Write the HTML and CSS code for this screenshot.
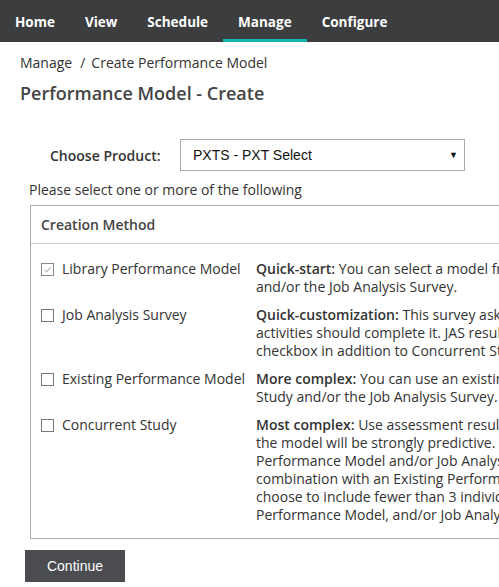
FILE: index.html
```html
<!DOCTYPE html>
<html>
<head>
<meta charset="utf-8">
<link rel="stylesheet" href="styles.css">
</head>
<body>
<nav class="topnav">
  <a class="nav-item">Home</a>
  <a class="nav-item">View</a>
  <a class="nav-item">Schedule</a>
  <a class="nav-item active">Manage</a>
  <a class="nav-item">Configure</a>
</nav>
<main class="page">
  <div class="crumbs"><span>Manage</span><span class="sep">/</span><span>Create Performance Model</span></div>
  <h1 class="title">Performance Model - Create</h1>
  <div class="product-row">
    <label class="product-label">Choose Product:</label>
    <div class="select"><span>PXTS - PXT Select</span><span class="arrow">&#9660;</span></div>
  </div>
  <p class="hint">Please select one or more of the following</p>
  <div class="methods">
    <div class="methods-head">Creation Method</div>
    <div class="methods-body">
      <div class="method">
        <div class="opt"><span class="cb checked"><svg viewBox="0 0 13 13" width="13" height="13"><path d="M3.5 6.8 L5.6 8.8 L9.6 4.2" fill="none" stroke="#9a9aa8" stroke-width="1"/></svg></span>Library Performance Model</div>
        <div class="desc">
          <span class="ln"><b>Quick-start:</b> You can select a model from the library and customize it with Concurrent Study</span>
          <span class="ln">and/or the Job Analysis Survey.</span>
        </div>
      </div>
      <div class="method">
        <div class="opt"><span class="cb"></span>Job Analysis Survey</div>
        <div class="desc">
          <span class="ln"><b>Quick-customization:</b> This survey asks people familiar with the position which</span>
          <span class="ln">activities should complete it. JAS results can be used alone, or you can select this</span>
          <span class="ln">checkbox in addition to Concurrent Study and/or an Existing Performance Model.</span>
        </div>
      </div>
      <div class="method">
        <div class="opt"><span class="cb"></span>Existing Performance Model</div>
        <div class="desc">
          <span class="ln"><b>More complex:</b> You can use an existing performance model and customize it with Concurrent</span>
          <span class="ln">Study and/or the Job Analysis Survey.</span>
        </div>
      </div>
      <div class="method">
        <div class="opt"><span class="cb"></span>Concurrent Study</div>
        <div class="desc">
          <span class="ln"><b>Most complex:</b> Use assessment results from successful employees so that</span>
          <span class="ln">the model will be strongly predictive.</span>
          <span class="ln">Performance Model and/or Job Analysis Survey results can be used in</span>
          <span class="ln">combination with an Existing Performance Model. If you</span>
          <span class="ln">choose to include fewer than 3 individuals, you must also select Library</span>
          <span class="ln">Performance Model, and/or Job Analysis Survey.</span>
        </div>
      </div>
    </div>
  </div>
  <button class="btn">Continue</button>
</main>
</body>
</html>
```
FILE: styles.css
```css
html, body { margin: 0; padding: 0; overflow: hidden; }
body { font-family: "Open Sans", "Liberation Sans", sans-serif; color: #333; background: #fff; width: 499px; }
.topnav { display: flex; height: 42px; background: #3c3d3f; padding-left: 1px; }
.nav-item { display: flex; align-items: center; color: #fff; font-weight: 700; font-size: 13.5px; padding: 5px 15px 0 15px; height: 42px; box-sizing: border-box; border-bottom: 3px solid transparent; }
.nav-item:first-child { padding-left: 14px; }
.nav-item.active { border-bottom-color: #13b5b1; }
.page { padding: 10px 0 0 0; }
.crumbs { font-size: 14px; color: #333; padding-left: 20px; height: 22px; line-height: 22px; }
.crumbs .sep { margin: 0 6px 0 8px; }
.title { font-size: 18px; font-weight: 600; color: #444; margin: 7px 0 0 20px; line-height: 24px; }
.product-row { display: flex; align-items: center; margin: 34px 0 0 50px; }
.product-label { font-size: 14px; font-weight: 600; color: #333; width: 130px; }
.select { box-sizing: border-box; width: 285px; height: 32px; border: 1px solid #aaaab2; display: flex; align-items: center; justify-content: space-between; padding: 0 6px 0 12px; font-family: "Liberation Sans", Arial, sans-serif; font-size: 14px; color: #111; }
.arrow { font-size: 9px; color: #111; }
.hint { font-size: 14px; margin: 9px 0 0 29px; line-height: 20px; }
.methods { margin: 5px 0 0 30px; width: 760px; border: 1px solid #aaaab0; }
.methods-head { font-size: 14px; font-weight: 600; color: #444; padding: 0 0 0 10px; height: 38px; line-height: 38px; border-bottom: 1px solid #ccc; box-sizing: border-box; }
.methods-body { padding: 11px 0 9px 0; }
.method { display: flex; padding: 5px 0; }
.opt { flex: none; box-sizing: border-box; width: 225px; padding-left: 10px; font-size: 14px; line-height: 18px; display: flex; align-items: flex-start; white-space: nowrap; }
.cb { box-sizing: border-box; width: 13px; height: 13px; border: 1px solid #777; margin: 3px 8px 0 0; display: inline-block; flex: none; position: relative; }
.cb.checked { border-color: #888; }
.cb svg { position: absolute; left: -1px; top: -1px; }
.desc { flex: none; font-size: 14px; line-height: 18px; }
.desc b { font-weight: 600; }
.ln { display: block; white-space: nowrap; }
.btn { margin: 11px 0 0 25px; width: 100px; height: 32px; border: 0; background: #4a4c50; color: #fff; font-family: "Liberation Sans", Arial, sans-serif; font-size: 14px; display: block; }
```
